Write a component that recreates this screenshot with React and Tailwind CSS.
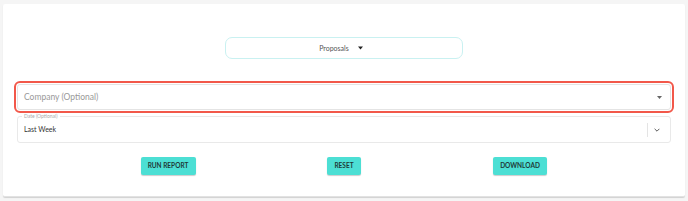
import React from 'react';

const Caret = ({ className }) => (
  <svg viewBox="0 0 10 6" className={className} fill="currentColor"><path d="M0 0h10L5 6z" /></svg>
);

const App = () => {
  return (
    <div className="w-[688px] h-[201px] bg-[#f5f5f5] pt-[4px] px-[3px] font-['Lato','Open_Sans',sans-serif]">
      <div className="bg-white h-[193px] rounded-[2px] shadow-[0_1px_1px_rgba(0,0,0,0.15)] border-b border-[#e2e2e2]">
        <div className="pt-[33px] flex justify-center">
          <div className="w-[238px] h-[22px] border border-[#c9f1f1] rounded-[7px] flex items-center justify-center gap-[9px] pr-[6px]">
            <span className="text-[7px] text-[#555]">Proposals</span>
            <Caret className="w-[5px] h-[4px] text-[#222]" />
          </div>
        </div>

        <div className="mt-[22px] mx-[11px] border-2 border-[#f2584a] rounded-[6px] p-px">
          <div className="h-[26px] border border-[#e4e4e4] rounded-[3px] flex items-center justify-between pl-[6px] pr-[8px]">
            <span className="text-[8.5px] text-[#999]">Company (Optional)</span>
            <Caret className="w-[5px] h-[3px] text-[#666]" />
          </div>
        </div>

        <div className="mt-[3px] mx-[14px] relative h-[27px] border border-[#e9e9e9] rounded-[3px] flex items-center pl-[6px] pr-[10px]">
          <span className="absolute -top-[4px] left-[4px] bg-white px-[2px] text-[5px] leading-[6px] text-[#aaa]">Date (Optional)</span>
          <span className="text-[7px] text-[#333] flex-1">Last Week</span>
          <div className="w-px h-[14px] bg-[#e4e4e4] mr-[6px]" />
          <svg viewBox="0 0 10 6" className="w-[6px] h-[4px] text-[#555]" fill="none" stroke="currentColor" strokeWidth="1.6"><path d="M1 1l4 4 4-4" /></svg>
        </div>

        <div className="mt-[14px] flex justify-center">
          <div className="w-[176px] flex justify-center">
            <button className="h-[18px] w-[55px] bg-[#4cdfd4] rounded-[2px] shadow-[0_1px_1px_rgba(0,0,0,0.2)] text-[6.5px] font-bold text-[#1f3a38]">RUN REPORT</button>
          </div>
          <div className="w-[176px] flex justify-center">
            <button className="h-[18px] w-[34px] bg-[#4cdfd4] rounded-[2px] shadow-[0_1px_1px_rgba(0,0,0,0.2)] text-[6.5px] font-bold text-[#1f3a38]">RESET</button>
          </div>
          <div className="w-[176px] flex justify-center">
            <button className="h-[18px] w-[54px] bg-[#4cdfd4] rounded-[2px] shadow-[0_1px_1px_rgba(0,0,0,0.2)] text-[6.5px] font-bold text-[#1f3a38]">DOWNLOAD</button>
          </div>
        </div>
      </div>
    </div>
  );
};

export default App;
